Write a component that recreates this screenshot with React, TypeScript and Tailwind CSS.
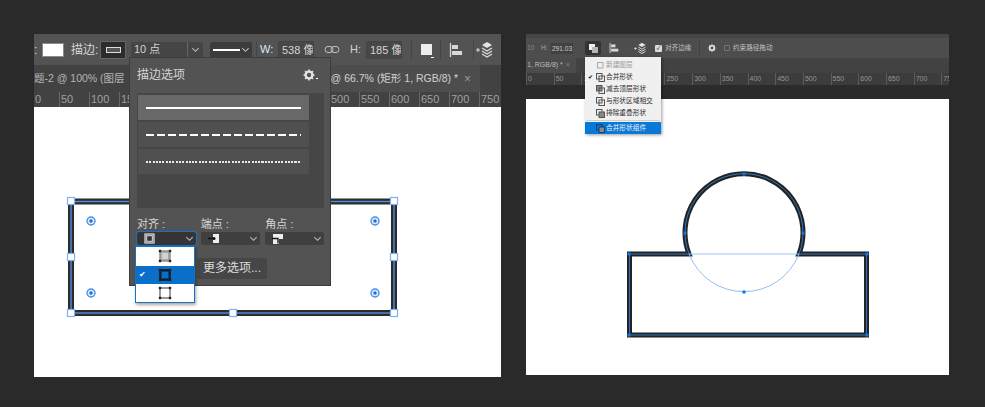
import React from "react";

const font = { fontFamily: '"Liberation Sans","Noto Sans CJK SC",sans-serif' };

const Chevron = ({ c = "#bdbdbd", s = 9 }: { c?: string; s?: number }) => (
  <svg width={s} height={s} viewBox="0 0 10 10" className="shrink-0"><path d="M1.500 3.500 5 7l3.500-3.500" fill="none" stroke={c} strokeWidth="1.200" /></svg>
);

const Gear = ({ s = 12 }: { s?: number }) => (
  <svg width={s} height={s} viewBox="0 0 12 12"><circle cx="6" cy="6" r="3.400" fill="none" stroke="#e4e4e4" strokeWidth="2.400" /><path d="M6 .5v2M6 9.500v2M.5 6h2M9.500 6h2M2.100 2.100l1.400 1.400M8.500 8.500l1.400 1.400M9.900 2.100 8.500 3.500M3.500 8.500l-1.400 1.400" stroke="#e4e4e4" strokeWidth="1.700" /></svg>
);

const AlignIcon = ({ s = 14 }: { s?: number }) => (
  <svg width={s} height={s} viewBox="0 0 14 14"><path d="M1.500 0v14" stroke="#d8d8d8" strokeWidth="1.300" /><rect x="3" y="2" width="6" height="4" fill="#d8d8d8" /><rect x="3" y="8" width="10" height="4" fill="#d8d8d8" /></svg>
);

const LayersIcon = ({ s = 18 }: { s?: number }) => (
  <svg width={s} height={s} viewBox="0 0 18 18"><path d="M0 9h4M2 7v4" stroke="#ddd" /><path d="M11 1 16 4l-5 3L6 4z" fill="#e4e4e4" /><path d="M6 7l5 3 5-3M6 10l5 3 5-3M6 13l5 3 5-3" fill="none" stroke="#ddd" strokeWidth="1.300" /></svg>
);

const AlignGlyph = ({ variant }: { variant: number }) => {
  const dark = variant === 1;
  return (
    <svg width="14" height="14" viewBox="0 0 14 14">
      <rect x="2" y="2" width="10" height="10" fill={variant === 2 ? "#fff" : dark ? "#0a3f78" : "#a8a8a8"} stroke={dark ? "#111" : "#8f8f8f"} strokeWidth={variant === 2 ? 1.800 : 1.500} />
      {variant === 0 && <rect x="4" y="4" width="6" height="6" fill="#d2d2d2" />}
      {dark && <rect x="4" y="4" width="6" height="6" fill="#0a6fc9" />}
      {[[2, 2], [12, 2], [2, 12], [12, 12]].map(([x, y]) => (
        <rect key={`${x}${y}`} x={x - 1.200} y={y - 1.200} width="2.400" height="2.400" fill="#222" />
      ))}
    </svg>
  );
};

const Select = ({ w, children }: { w: string; children: React.ReactNode }) => (
  <div className={`flex h-[13px] items-center justify-between rounded-[2px] bg-[#3f3f3f] pl-[7px] pr-[2px] ${w}`}>{children}<Chevron /></div>
);

const Handle = ({ x, y }: { x: number; y: number }) => (
  <rect x={x - 3.500} y={y - 3.500} width="7" height="7" fill="#fff" stroke="#7fb0ef" strokeWidth="1.200" />
);

const Target = ({ x, y }: { x: number; y: number }) => (
  <g>
    <circle cx={x} cy={y} r="4" fill="#dfeafa" stroke="#4a90e8" strokeWidth="1.400" />
    <circle cx={x} cy={y} r="1.700" fill="#1f6fd8" />
  </g>
);

const MenuItem = ({ label, dim, checked, on, kind }: { label: string; dim?: boolean; checked?: boolean; on?: boolean; kind: number }) => (
  <div className={`flex h-[12px] items-center pl-[3px] text-[6.700px] leading-none ${on ? "bg-[#0a78d7] text-[#f2f2f2]" : dim ? "text-[#9a9a9a]" : "text-[#2a2a2a]"}`}>
    <span className="w-[7px] overflow-hidden text-[6px] text-black">{checked ? "✔" : ""}</span>
    <svg width="9" height="9" viewBox="0 0 9 9" className="ml-[1px] mr-[1px] shrink-0">
      <rect x={kind === 0 ? 1.500 : 0.500} y={kind === 0 ? 1.500 : 0.500} width="5.500" height="5.500" fill={kind === 2 ? "#8a8a8a" : "none"} stroke={dim ? "#aaa" : on ? "#103f70" : "#555"} />
      {kind !== 0 && <rect x="3" y="3" width="5.500" height="5.500" fill={kind === 3 ? "#888" : "none"} stroke={on ? "#103f70" : "#555"} />}
    </svg>
    <span>{label}</span>
  </div>
);

export default function App() {
  const leftRuler = [0, 50, 100, 150, 200, 250, 300, 350, 400, 450, 500, 550, 600, 650, 700, 750];
  const rightRuler = [0, 50, 100, 150, 200, 250, 300, 350, 400, 450, 500, 550, 600, 650, 700, 750];
  return (
    <div className="flex h-[407px] w-[985px] items-start bg-[#2a2a2a] pt-[34px] pl-[34px]" style={font}>
      {/* Left window */}
      <div className="relative flex h-[343px] w-[467px] flex-col overflow-hidden">
        <div className="flex h-[31px] items-center bg-[#535353] text-[12px] text-[#d4d4d4]">
          <span className="w-[8px]">:</span>
          <div className="h-[14px] w-[22px] border border-[#8a8a8a] bg-white" />
          <span className="ml-[7px] w-[30px] whitespace-nowrap">描边:</span>
          <div className="flex h-[16px] w-[24px] items-center justify-center bg-[#2c2c2c] outline outline-1 outline-[#666]">
            <div className="h-[6px] w-[15px] border border-[#dcdcdc] bg-[#555]" />
          </div>
          <div className="ml-[6px] flex h-[16px] w-[72px] items-center justify-between rounded-[2px] bg-[#454545] pl-[3px] pr-[3px]">
            <span className="text-[11px]">10 点</span>
            <div className="flex h-full items-center border-l border-[#666] pl-[3px]"><Chevron /></div>
          </div>
          <div className="ml-[7px] flex h-[16px] w-[42px] items-center justify-between rounded-[2px] bg-[#3c3c3c] pl-[3px] pr-[2px]">
            <div className="h-[2px] w-[27px] bg-white" />
            <Chevron />
          </div>
          <div className="ml-[4px] h-[18px] w-px bg-[#454545]" />
          <span className="ml-[3px] w-[18px] text-[11px] text-[#dbe7f5]">W:</span>
          <div className="h-[18px] w-[36px] overflow-hidden rounded-[2px] border border-[#444] bg-[#474747] pl-[3px] text-[11px] leading-[16px] whitespace-nowrap">538 像素</div>
          <svg width="16" height="9" viewBox="0 0 16 9" className="ml-[10px]"><rect x="1" y="1.500" width="8" height="6" rx="3" fill="none" stroke="#c0c0c0" /><rect x="7" y="1.500" width="8" height="6" rx="3" fill="none" stroke="#c0c0c0" /></svg>
          <span className="ml-[10px] w-[16px] text-[11px]">H:</span>
          <div className="h-[18px] w-[36px] overflow-hidden rounded-[2px] border border-[#444] bg-[#474747] pl-[3px] text-[11px] leading-[16px] whitespace-nowrap">185 像素</div>
          <div className="ml-[9px] h-[20px] w-px bg-[#454545]" />
          <div className="relative ml-[9px] h-[11px] w-[11px] bg-[#ededed]">
            <span className="absolute -right-[2px] -bottom-[3px] h-px w-[3px] bg-white" />
          </div>
          <div className="ml-[8px] h-[20px] w-px bg-[#454545]" />
          <div className="ml-[8px]"><AlignIcon /></div>
          <div className="ml-[10px] h-[20px] w-px bg-[#454545]" />
          <div className="ml-[2px]"><LayersIcon /></div>
        </div>
        <div className="flex h-[27px] items-stretch bg-[#424242] text-[10.500px] text-[#b5b5b5]">
          <div className="flex w-[146px] items-center whitespace-nowrap">题-2 @ 100% (图层</div>
          <div className="flex w-[300px] items-center justify-end whitespace-nowrap bg-[#4d4d4d] pr-[9px]">
            <span className="text-[#d2d2d2]">@ 66.7% (矩形 1, RGB/8) *</span>
            <span className="ml-[6px] text-[12px] text-[#999]">×</span>
          </div>
        </div>
        <div className="flex h-[15px] overflow-hidden bg-[#424242] text-[11px] leading-[15px] text-[#a0a0a0]">
          {leftRuler.map((n, i) => (
            <div key={n} className={`h-full shrink-0 overflow-hidden border-l border-[#666] pl-[1px] ${i === 0 ? "w-[25px] border-l-0 pl-0" : "w-[30px]"}`}>{n}</div>
          ))}
        </div>
        <div className="relative flex-1 bg-white">
          <svg className="absolute inset-0" width="467" height="270" viewBox="34 107 467 270">
            <rect x="71" y="201.500" width="323" height="111.500" fill="none" stroke="#2b2b2b" strokeWidth="6" />
            <rect x="71" y="201.500" width="323" height="111.500" fill="none" stroke="#4f8fe6" strokeWidth="1.400" />
            <Handle x={71} y={201} /><Handle x={394} y={201} /><Handle x={71} y={257} /><Handle x={394} y={257} />
            <Handle x={71} y={313} /><Handle x={233} y={313} /><Handle x={394} y={313} />
            <Target x={91} y={221} /><Target x={375} y={221} /><Target x={91} y={293} /><Target x={375} y={293} />
          </svg>
        </div>

        {/* Stroke options panel */}
        <div className="absolute top-[23px] left-[95px] flex h-[229px] w-[202px] flex-col border border-[#3d3d3d] bg-[#535353] pr-[6px] pl-[7px] text-[#d6d6d6]">
          <div className="flex h-[35px] items-center justify-between pr-[6px] pb-[2px]">
            <span className="text-[12px]">描边选项</span>
            <div className="flex items-end"><Gear /><span className="mb-[2px] ml-[1px] h-px w-[2px] bg-white" /></div>
          </div>
          <div className="flex h-[115px] flex-col gap-[2px] bg-[#464646] pt-[2px] pr-[15px] pl-px">
            <div className="flex h-[25px] items-center bg-[#686868] px-[8px]"><div className="h-[2px] w-full bg-white" /></div>
            <div className="flex h-[25px] items-center bg-[#505050] px-[8px]"><div className="h-[2px] w-full bg-[repeating-linear-gradient(90deg,#fff_0,#fff_8px,transparent_8px,transparent_11px)]" /></div>
            <div className="flex h-[25px] items-center bg-[#505050] px-[8px]"><div className="h-[2px] w-full bg-[repeating-linear-gradient(90deg,#e8e8e8_0,#e8e8e8_2px,transparent_2px,transparent_3.300px)]" /></div>
          </div>
          <div className="mt-[9px] flex gap-[5px] text-[11px] leading-[14px]">
            <div className="w-[59px]">对齐 :</div>
            <div className="w-[60px]">端点 :</div>
            <div className="w-[59px]">角点 :</div>
          </div>
          <div className="mt-[1px] flex gap-[5px]">
            <div className="flex h-[13px] w-[59px] items-center justify-between rounded-[2px] bg-[#353535] pl-[6px] pr-[2px] outline outline-1 outline-[#1473c9]">
              <svg width="13" height="13" viewBox="0 0 14 14"><rect x="2" y="2" width="10" height="10" fill="#888" stroke="#ddd" /><rect x="4" y="4" width="6" height="6" fill="#333" stroke="#ddd" /></svg>
              <Chevron />
            </div>
            <Select w="w-[60px]">
              <svg width="13" height="11" viewBox="0 0 13 11"><rect x="5" y="1" width="6" height="9" fill="#eee" /><path d="M0 5.500h7" stroke="#111" strokeWidth="1.500" /><circle cx="6" cy="5.500" r="1.500" fill="#111" /></svg>
            </Select>
            <Select w="w-[59px]">
              <svg width="13" height="11" viewBox="0 0 13 11"><path d="M1 1h10v5H7v5H1z" fill="#eee" /><path d="M0 5.500h6v5" fill="none" stroke="#111" strokeWidth="1.300" /></svg>
            </Select>
          </div>
          <button className="absolute top-[200px] left-[67px] h-[21px] w-[70px] rounded-[2px] bg-[#464646] text-center text-[12px] leading-[21px] text-[#dedede]">更多选项...</button>
        </div>

        {/* Align menu */}
        <div className="absolute top-[212px] left-[101px] flex h-[57px] w-[60px] flex-col border border-[#1473c9] bg-white shadow-[1px_2px_3px_rgba(0,0,0,0.35)]">
          <div className="flex h-[19px] items-center justify-center"><AlignGlyph variant={0} /></div>
          <div className="relative flex h-[19px] items-center justify-center bg-[#0a6fc9]">
            <span className="absolute left-[3px] text-[8px] leading-none text-white">✔</span>
            <AlignGlyph variant={1} />
          </div>
          <div className="flex h-[18px] items-center justify-center"><AlignGlyph variant={2} /></div>
        </div>
      </div>

      {/* Right window */}
      <div className="relative ml-[25px] flex h-[341px] w-[423px] flex-col overflow-hidden bg-[#2b2b2b]">
        <div className="h-[4px] bg-[#454545]" />
        <div className="flex h-[20px] items-center bg-[#4d4d4d] text-[6.600px] whitespace-nowrap text-[#c4c4c4]">
          <span className="ml-[1px] w-[14px] text-[#888]">10</span>
          <span className="w-[10px] text-[#aaa]">H:</span>
          <div className="h-[11px] w-[22px] bg-[#414141] text-center leading-[11px] text-[#ccc]">291.03</div>
          <div className="ml-[12px] flex h-[14px] w-[16px] items-center justify-center rounded-[2px] bg-[#333]">
            <svg width="11" height="11" viewBox="0 0 11 11"><rect x="1" y="1" width="6" height="6" fill="#eee" /><rect x="4" y="4" width="6" height="6" fill="#b5b5b5" /></svg>
          </div>
          <div className="ml-[8px]"><AlignIcon s={10} /></div>
          <div className="ml-[15px]"><LayersIcon s={13} /></div>
          <div className="ml-[8px] flex h-[7px] w-[7px] items-center justify-center rounded-[1px] bg-[#ddd] text-[6px] leading-none text-[#222]">✓</div>
          <span className="ml-[3px] w-[34px]">对齐边缘</span>
          <div className="h-[14px] w-px bg-[#3f3f3f]" />
          <div className="ml-[8px]"><Gear s={8} /></div>
          <div className="ml-[8px] h-[6px] w-[6px] rounded-[1px] border border-[#777]" />
          <span className="ml-[3px]">约束路径拖动</span>
        </div>
        <div className="flex h-[15px] items-stretch bg-[#424242] text-[7px] text-[#bbb]">
          <div className="flex w-[50px] items-center whitespace-nowrap bg-[#4c4c4c] pl-px">1, RGB/8) * <span className="ml-[3px] text-[#888]">×</span></div>
        </div>
        <div className="flex h-[12px] overflow-hidden bg-[#3c3c3c] text-[7px] leading-[12px] text-[#959595]">
          {rightRuler.map((n) => (
            <div key={n} className="h-full w-[27.700px] shrink-0 overflow-hidden border-l border-[#5a5a5a] pl-px">{n}</div>
          ))}
        </div>
        <div className="h-[14px] bg-[#2b2b2b]" />
        <div className="relative flex-1 bg-white">
          <svg className="absolute inset-0" width="423" height="276" viewBox="526 99 423 276">
            <path d="M689 254H629.500V335H866.500V254H799A59 59 0 1 0 689 254Z" fill="none" stroke="#222" strokeWidth="5" />
            <path d="M689 254H629.500V335H866.500V254H799A59 59 0 1 0 689 254Z" fill="none" stroke="#2f78c8" strokeWidth="1" />
            <path d="M689 254H799" stroke="#9cc8f4" strokeWidth="1.200" />
            <path d="M689 254A59 59 0 0 0 799 254" fill="none" stroke="#8fc0f2" strokeWidth="1" />
            {[[744, 174], [685, 233], [803, 233], [744, 292], [629, 254], [867, 254], [629, 335], [867, 335]].map(([x, y]) => (
              <rect key={`${x}-${y}`} x={x - 1.500} y={y - 1.500} width="3" height="3" fill="#0a78e8" />
            ))}
          </svg>
        </div>

        {/* Shape operations menu */}
        <div className="absolute top-[23px] left-[59px] flex h-[77px] w-[76px] flex-col bg-[#f0f0f0] pt-[2px] shadow-[1px_1px_3px_rgba(0,0,0,0.4)]">
          <MenuItem label="新建图层" dim kind={0} />
          <MenuItem label="合并形状" checked kind={1} />
          <MenuItem label="减去顶层形状" kind={2} />
          <MenuItem label="与形状区域相交" kind={1} />
          <MenuItem label="排除重叠形状" kind={3} />
          <div className="mx-[1px] mt-[1px] mb-[1px] h-px bg-[#cfcfcf]" />
          <MenuItem label="合并形状组件" on kind={3} />
        </div>
      </div>
    </div>
  );
}
